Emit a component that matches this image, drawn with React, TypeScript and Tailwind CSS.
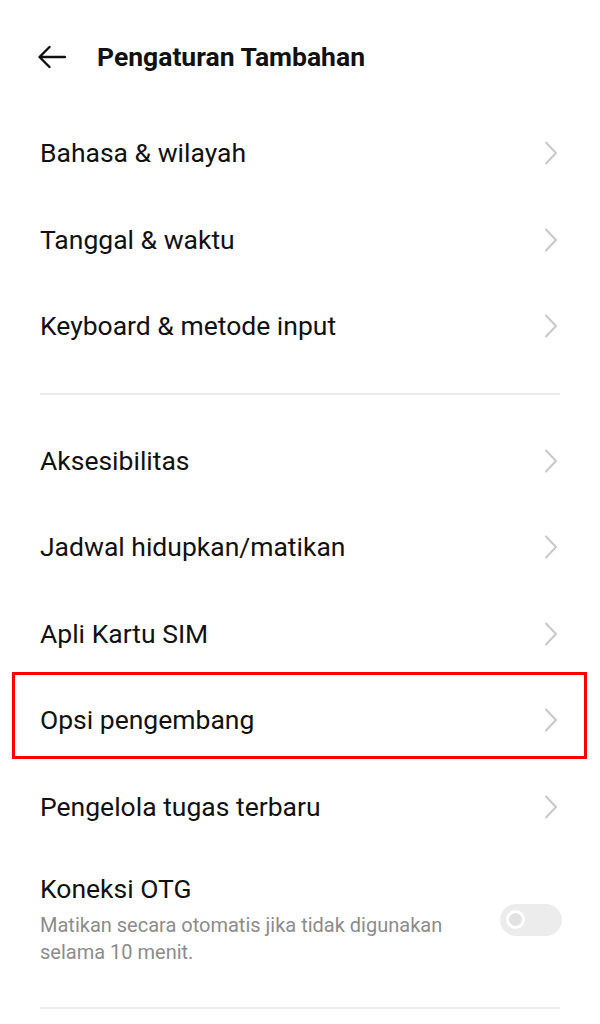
import { ReactNode } from "react";

const groupOne = ["Bahasa & wilayah", "Tanggal & waktu", "Keyboard & metode input"];
const groupTwo = [
  "Aksesibilitas",
  "Jadwal hidupkan/matikan",
  "Apli Kartu SIM",
  "Opsi pengembang",
  "Pengelola tugas terbaru",
];

function Chevron() {
  return (
    <svg width="14" height="24" viewBox="0 0 14 24" fill="none" className="shrink-0">
      <path d="M2 1.5 L12 12 L2 22.5" stroke="#c9c9c9" strokeWidth="2" strokeLinecap="round" strokeLinejoin="round" />
    </svg>
  );
}

function Row({ label, highlight }: { label: string; highlight?: boolean }) {
  return (
    <div className="relative flex h-[86.5px] items-center justify-between pl-10 pr-[42px]">
      <span className="text-[26.5px] leading-8 text-[#111111]">{label}</span>
      <Chevron />
      {highlight && (
        <div className="pointer-events-none absolute left-[12px] right-[13px] top-[-5px] bottom-[5px] border-[3px] border-[#ff0000]" />
      )}
    </div>
  );
}

function Divider() {
  return (
    <div className="flex h-12 items-center px-10">
      <div className="h-[2px] w-full bg-[#ebebeb]" />
    </div>
  );
}

function Toggle() {
  return (
    <div className="flex h-[32px] w-[62px] shrink-0 items-center rounded-full bg-[#ececec] pl-[6px]">
      <div className="h-[19px] w-[19px] rounded-full border-[3px] border-white bg-[#e2e2e2]" />
    </div>
  );
}

function Section({ children }: { children: ReactNode }) {
  return <div className="flex flex-col">{children}</div>;
}

export default function App() {
  return (
    <div className="min-h-[1024px] w-full bg-white font-['Roboto',sans-serif]">
      <header className="flex h-[110px] items-center pt-[4px] pl-[38px]">
        <svg width="28" height="24" viewBox="0 0 28 24" fill="none">
          <path d="M27 12 H2 M11.5 2 L1.5 12 L11.5 22" stroke="#111111" strokeWidth="2.4" strokeLinecap="round" strokeLinejoin="round" />
        </svg>
        <h1 className="ml-[31px] text-[26.5px] font-bold leading-8 text-[#111111]">Pengaturan Tambahan</h1>
      </header>

      <Section>
        {groupOne.map((label) => (
          <Row key={label} label={label} />
        ))}
      </Section>

      <Divider />

      <Section>
        {groupTwo.map((label) => (
          <Row key={label} label={label} highlight={label === "Opsi pengembang"} />
        ))}
      </Section>

      <div className="flex items-center justify-between pl-10 pr-[38px] pt-[23px]">
        <div className="flex flex-col">
          <span className="text-[26.5px] leading-8 text-[#111111]">Koneksi OTG</span>
          <p className="mt-[7px] max-w-[420px] text-[20px] leading-[27px] text-[#8c8c8c]">
            Matikan secara otomatis jika tidak digunakan selama 10 menit.
          </p>
        </div>
        <Toggle />
      </div>

      <div className="flex h-[84px] items-center px-10">
        <div className="h-[2px] w-full bg-[#ebebeb]" />
      </div>
    </div>
  );
}
